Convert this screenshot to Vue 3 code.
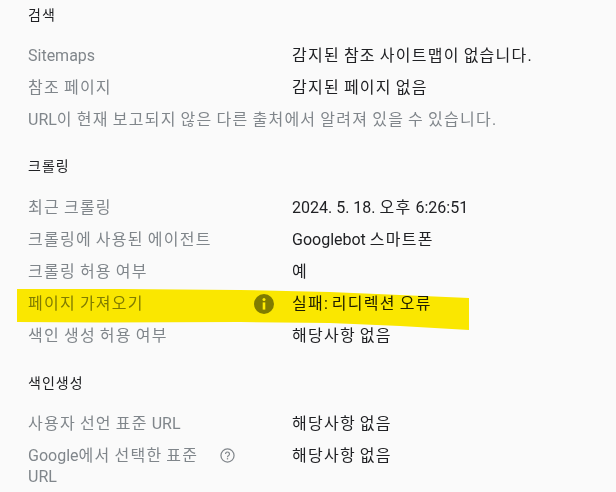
<script setup>
import { h } from 'vue'

// hangul runs sit wider than latin in the source, so they get their own span
const Txt = (props) =>
  props.text
    .split(/([가-힣]+)/)
    .filter(Boolean)
    .map((part) => (/[가-힣]/.test(part) ? h('span', { class: 'ko' }, part) : part))
Txt.props = ['text']

const searchRows = [
  { label: 'Sitemaps', value: '감지된 참조 사이트맵이 없습니다.' },
  { label: '참조 페이지', value: '감지된 페이지 없음' },
]
const crawlRows = [
  { label: '최근 크롤링', value: '2024. 5. 18. 오후 6:26:51' },
  { label: '크롤링에 사용된 에이전트', value: 'Googlebot 스마트폰' },
  { label: '크롤링 허용 여부', value: '예' },
  { label: '페이지 가져오기', value: '실패: 리디렉션 오류', info: true },
  { label: '색인 생성 허용 여부', value: '해당사항 없음' },
]
</script>

<template>
  <div class="page">
    <section class="first">
      <h3>검색</h3>
      <div v-for="row in searchRows" :key="row.label" class="row">
        <div class="label"><span><Txt :text="row.label" /></span></div>
        <div class="value"><Txt :text="row.value" /></div>
      </div>
      <div class="row note"><Txt text="URL이 현재 보고되지 않은 다른 출처에서 알려져 있을 수 있습니다." /></div>
    </section>

    <section>
      <h3>크롤링</h3>
      <div v-for="row in crawlRows" :key="row.label" class="row">
        <div class="label">
          <span><Txt :text="row.label" /></span>
          <svg v-if="row.info" class="info" width="20" height="20" viewBox="0 0 20 20">
            <circle cx="10" cy="10" r="10" fill="#80868b" />
            <circle cx="10" cy="5.6" r="1.5" fill="#fff" />
            <rect x="8.7" y="8.4" width="2.6" height="7.2" fill="#fff" />
          </svg>
        </div>
        <div class="value"><Txt :text="row.value" /></div>
      </div>
    </section>

    <section class="last">
      <h3>색인생성</h3>
      <div class="row">
        <div class="label"><span><Txt text="사용자 선언 표준 URL" /></span></div>
        <div class="value"><Txt text="해당사항 없음" /></div>
      </div>
      <div class="row">
        <div class="label start">
          <span class="wrap"><Txt text="Google에서 선택한 표준 URL" /></span>
          <svg class="help" width="15" height="15" viewBox="0 0 16 16" fill="none">
            <circle cx="8" cy="8" r="7" stroke="#80868b" stroke-width="1.3" />
            <path d="M5.9 6.4a2.1 2.1 0 1 1 3.3 1.7c-.8.5-1.2.9-1.2 1.8" stroke="#80868b" stroke-width="1.3" />
            <rect x="7.3" y="10.8" width="1.4" height="1.4" fill="#80868b" />
          </svg>
        </div>
        <div class="value"><Txt text="해당사항 없음" /></div>
      </div>
    </section>

    <!-- hand drawn marker stroke over the fetch row -->
    <svg class="marker" width="616" height="492" viewBox="0 0 616 492">
      <path
        d="M17 289 L120 289 L240 290 L330 292 L400 295 L469 298 L469 330 L400 326 L330 323 L240 322 L100 322.500 L17 322 Z"
        fill="#ffec00"
      />
    </svg>
  </div>
</template>

<style scoped>
.page {
  position: relative;
  width: 616px;
  height: 492px;
  overflow: hidden;
  box-sizing: border-box;
  padding: 0 28px;
  background: #fafafa;
  font-family: Roboto, "Noto Sans CJK KR", sans-serif;
  font-size: 16px;
  line-height: 21px;
  color: #202124;
}

section {
  margin-top: 15px;
}

section.first {
  margin-top: 5px;
}

section.last {
  margin-top: 16px;
}

h3 {
  margin: 0 0 20px;
  font-size: 14px;
  font-weight: 400;
  line-height: 21px;
  letter-spacing: 1px;
}

.first h3,
.last h3 {
  margin-bottom: 19px;
}

.row {
  display: grid;
  grid-template-columns: 264px 1fr;
  padding-bottom: 11px;
}

.label {
  display: flex;
  align-items: flex-start;
  justify-content: space-between;
  width: 246px;
  color: #80868b;
}

.label.start {
  justify-content: flex-start;
  gap: 12px;
}

.wrap {
  width: 180px;
}

.info {
  flex: none;
  margin-top: 1px;
}

.help {
  flex: none;
  margin-top: 3px;
}

.note {
  display: block;
  color: #80868b;
}

.marker {
  position: absolute;
  top: 0;
  left: 0;
  mix-blend-mode: multiply;
  pointer-events: none;
}
</style>

<style>
html,
body {
  margin: 0;
  background: #fafafa;
}

.ko {
  letter-spacing: 1.25px;
}
</style>
